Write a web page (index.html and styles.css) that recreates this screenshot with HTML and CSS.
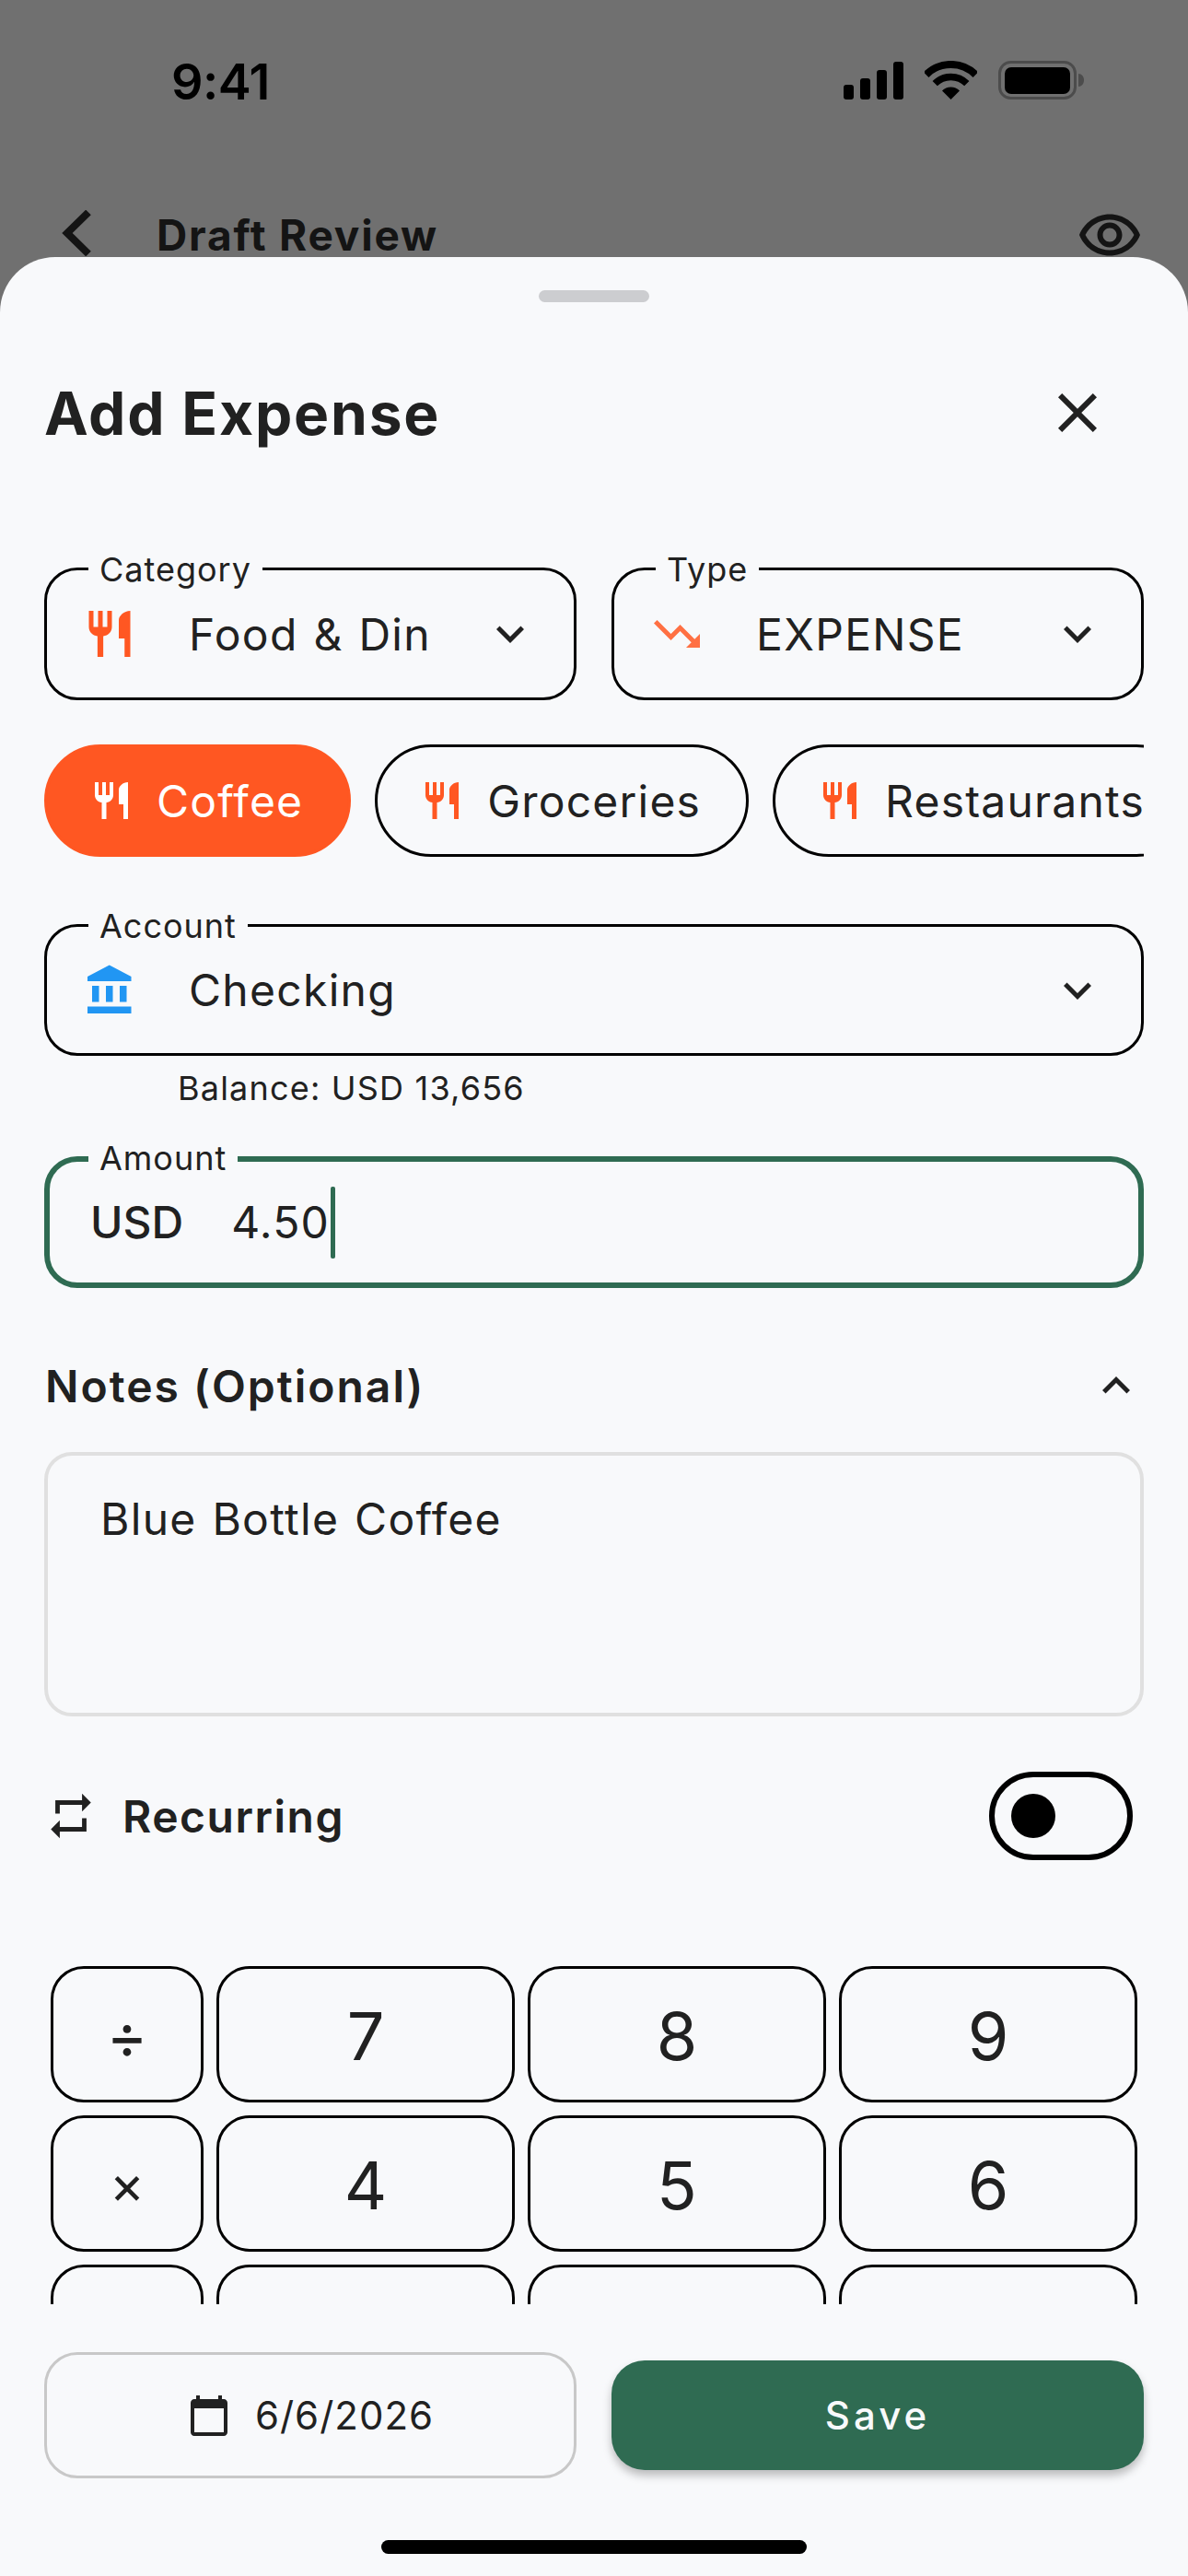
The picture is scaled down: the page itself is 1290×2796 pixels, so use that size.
FILE: index.html
```html
<!DOCTYPE html>
<html lang="en">
<head>
    <meta charset="UTF-8">
    <meta name="viewport" content="width=device-width, initial-scale=1.0">
    <title>Add Expense</title>
    <link rel="stylesheet" href="styles.css">
</head>
<body>
    <div class="screen">
        <!-- page behind the sheet, dimmed -->
        <div class="backdrop">
            <div class="statusbar">
                <span class="time">9:41</span>
                <div class="status-icons">
                    <svg width="65" height="41" viewBox="0 0 65 41">
                        <rect x="0" y="25" width="11" height="16" rx="3"/>
                        <rect x="18" y="18" width="11" height="23" rx="3"/>
                        <rect x="36" y="9" width="11" height="32" rx="3"/>
                        <rect x="54" y="0" width="11" height="41" rx="3"/>
                    </svg>
                    <svg class="wifi" width="57" height="42" viewBox="0 0 57 42">
                        <path d="M1.6 15.1A38 38 0 0 1 55.4 15.1" fill="none" stroke="#000" stroke-width="8"/>
                        <path d="M11.2 24.7A24.5 24.5 0 0 1 45.8 24.7" fill="none" stroke="#000" stroke-width="7.5"/>
                        <path d="M28.5 42L19 32.5A13.5 13.5 0 0 1 38 32.5Z"/>
                    </svg>
                    <svg class="battery" width="93" height="42" viewBox="0 0 93 42">
                        <rect x="1.5" y="1.5" width="82" height="39" rx="12" fill="none" stroke="#4c4c4c" stroke-width="3"/>
                        <rect x="7" y="7" width="71" height="29" rx="7"/>
                        <path d="M87 14c3.500 0 6 3 6 7s-2.500 7-6 7z" fill="#4c4c4c"/>
                    </svg>
                </div>
            </div>
            <div class="appbar">
                <svg class="back-icon" width="32" height="50" viewBox="0 0 32 50"><path d="M29 2.500L6 25l23 22.500"/></svg>
                <span class="appbar-title">Draft Review</span>
                <svg class="eye-icon" width="72" height="72" viewBox="0 0 24 24"><path d="M12 6.500c3.790 0 7.170 2.130 8.820 5.500-1.650 3.370-5.020 5.500-8.820 5.500S4.830 15.370 3.180 12C4.830 8.630 8.210 6.500 12 6.500m0-2C7 4.500 2.730 7.610 1 12c1.730 4.390 6 7.500 11 7.500s9.270-3.110 11-7.500c-1.730-4.390-6-7.500-11-7.500zm0 5c1.380 0 2.500 1.120 2.500 2.500s-1.120 2.500-2.500 2.500-2.500-1.120-2.500-2.500 1.120-2.500 2.500-2.500m0-2c-2.480 0-4.500 2.020-4.500 4.500s2.020 4.500 4.500 4.500 4.500-2.020 4.500-4.500-2.020-4.500-4.500-4.500z"/></svg>
            </div>
        </div>

        <div class="sheet">
            <div class="handle"></div>

            <div class="sheet-header">
                <h1>Add Expense</h1>
                <svg class="close-icon" width="72" height="72" viewBox="0 0 24 24"><path d="M19 6.410L17.590 5 12 10.590 6.410 5 5 6.410 10.590 12 5 17.590 6.410 19 12 13.410 17.590 19 19 17.590 13.410 12z"/></svg>
            </div>

            <div class="field-row">
                <div class="field">
                    <span class="field-label">Category</span>
                    <span class="field-icon food"><svg width="60" height="60" viewBox="0 0 24 24"><path d="M11 9H9V2H7v7H5V2H3v7c0 2.120 1.660 3.840 3.750 3.970V22h2.500v-9.030C11.340 12.840 13 11.120 13 9V2h-2v7zm5-3v8h2.500v8H21V2c-2.760 0-5 2.240-5 4z"/></svg></span>
                    <span class="field-value">Food &amp; Din</span>
                    <svg class="chevron" width="60" height="60" viewBox="0 0 24 24"><path d="M7.410 8.590L12 13.170l4.590-4.580L18 10l-6 6-6-6 1.410-1.410z"/></svg>
                </div>
                <div class="field">
                    <span class="field-label">Type</span>
                    <span class="field-icon expense"><svg width="60" height="60" viewBox="0 0 24 24"><path d="M16 18l2.290-2.290-4.880-4.880-4 4L2 7.410 3.410 6l6 6 4-4 6.300 6.290L22 12v6z"/></svg></span>
                    <span class="field-value">EXPENSE</span>
                    <svg class="chevron" width="60" height="60" viewBox="0 0 24 24"><path d="M7.410 8.590L12 13.170l4.590-4.580L18 10l-6 6-6-6 1.410-1.410z"/></svg>
                </div>
            </div>

            <div class="chips">
                <div class="chip selected">
                    <svg width="48" height="48" viewBox="0 0 24 24"><path d="M11 9H9V2H7v7H5V2H3v7c0 2.120 1.660 3.840 3.750 3.970V22h2.500v-9.030C11.340 12.840 13 11.120 13 9V2h-2v7zm5-3v8h2.500v8H21V2c-2.760 0-5 2.240-5 4z"/></svg>
                    <span>Coffee</span>
                </div>
                <div class="chip">
                    <svg width="48" height="48" viewBox="0 0 24 24"><path d="M11 9H9V2H7v7H5V2H3v7c0 2.120 1.660 3.840 3.750 3.970V22h2.500v-9.030C11.340 12.840 13 11.120 13 9V2h-2v7zm5-3v8h2.500v8H21V2c-2.760 0-5 2.240-5 4z"/></svg>
                    <span>Groceries</span>
                </div>
                <div class="chip">
                    <svg width="48" height="48" viewBox="0 0 24 24"><path d="M11 9H9V2H7v7H5V2H3v7c0 2.120 1.660 3.840 3.750 3.970V22h2.500v-9.030C11.340 12.840 13 11.120 13 9V2h-2v7zm5-3v8h2.500v8H21V2c-2.760 0-5 2.240-5 4z"/></svg>
                    <span>Restaurants</span>
                </div>
            </div>

            <div class="field account-field">
                <span class="field-label">Account</span>
                <span class="field-icon bank"><svg width="60" height="60" viewBox="0 0 24 24"><path d="M4 10v7h3v-7H4zm6 0v7h3v-7h-3zM2 22h19v-3H2v3zm14-12v7h3v-7h-3zm-4.500-9L2 6v2h19V6l-9.500-5z"/></svg></span>
                <span class="field-value">Checking</span>
                <svg class="chevron" width="60" height="60" viewBox="0 0 24 24"><path d="M7.410 8.590L12 13.170l4.590-4.580L18 10l-6 6-6-6 1.410-1.410z"/></svg>
            </div>
            <div class="balance">Balance: USD 13,656</div>

            <div class="field amount-field">
                <span class="field-label">Amount</span>
                <span class="currency">USD</span>
                <span class="amount">4.50</span>
                <span class="caret"></span>
            </div>

            <div class="notes-header">
                <h2>Notes (Optional)</h2>
                <svg class="chevron" width="60" height="60" viewBox="0 0 24 24"><path d="M7.410 15.410L12 10.830l4.590 4.580L18 14l-6-6-6 6z"/></svg>
            </div>
            <div class="notes-box">Blue Bottle Coffee</div>

            <div class="recurring">
                <svg class="repeat-icon" width="58" height="58" viewBox="0 0 24 24"><path d="M7 7h10v3l4-4-4-4v3H5v6h2V7zm10 10H7v-3l-4 4 4 4v-3h12v-6h-2v4z"/></svg>
                <span class="recurring-label">Recurring</span>
                <div class="toggle"><div class="thumb"></div></div>
            </div>

            <div class="keypad">
                <div class="key op">÷</div>
                <div class="key">7</div>
                <div class="key">8</div>
                <div class="key">9</div>
                <div class="key op times">×</div>
                <div class="key">4</div>
                <div class="key">5</div>
                <div class="key">6</div>
                <div class="key op"></div>
                <div class="key"></div>
                <div class="key"></div>
                <div class="key"></div>
            </div>

            <div class="actions">
                <div class="date-btn">
                    <svg width="48" height="48" viewBox="0 0 24 24"><path d="M20 3h-1V1h-2v2H7V1H5v2H4c-1.100 0-2 .9-2 2v16c0 1.100.9 2 2 2h16c1.100 0 2-.9 2-2V5c0-1.100-.9-2-2-2zm0 18H4V8h16v13z"/></svg>
                    <span>6/6/2026</span>
                </div>
                <div class="save-btn">Save</div>
            </div>

            <div class="home-bar"></div>
        </div>
    </div>
</body>
</html>
```

FILE: styles.css
```css
* {
    box-sizing: border-box;
}

body {
    margin: 0;
    font-family: Inter, "Noto Sans", sans-serif;
    color: #212121;
}

svg {
    display: block;
    flex: none;
}

.screen {
    width: 1290px;
    height: 2796px;
    background-color: #707070;
    display: flex;
    flex-direction: column;
    overflow: hidden;
}

/* behind the sheet */
.backdrop {
    height: 279px;
    flex: none;
    overflow: hidden;
}

.statusbar {
    height: 174px;
    display: flex;
    align-items: center;
    justify-content: space-between;
    padding: 2px 113px 0 186px;
}

.time {
    font-size: 54px;
    font-weight: 600;
    letter-spacing: -0.5px;
    color: #000;
}

.status-icons {
    display: flex;
    align-items: flex-end;
    gap: 23px;
    margin-bottom: 2px;
}

.appbar {
    height: 162px;
    display: flex;
    align-items: center;
    padding: 0 49px 0 67px;
    color: #141414;
}

.back-icon {
    margin-bottom: 4px;
    fill: none;
    stroke: #141414;
    stroke-width: 8;
}

.appbar-title {
    margin-left: 71px;
    font-size: 46px;
    line-height: 1;
    font-weight: 700;
    letter-spacing: 1.8px;
}

.eye-icon {
    margin-left: auto;
    fill: #141414;
}

/* bottom sheet */
.sheet {
    flex: 1;
    background-color: #f8f9fb;
    border-radius: 60px 60px 0 0;
    padding: 0 48px;
    display: flex;
    flex-direction: column;
}

.handle {
    width: 120px;
    height: 13px;
    margin: 36px auto 0;
    background-color: #cccdd0;
    border-radius: 7px;
}

.sheet-header {
    height: 80px;
    margin-top: 80px;
    display: flex;
    align-items: center;
    justify-content: space-between;
}

h1 {
    margin: 0;
    font-size: 64px;
    font-weight: 700;
    letter-spacing: 1.8px;
}

.close-icon {
    margin-right: 36px;
    fill: #212121;
}

.field-row {
    display: grid;
    grid-template-columns: 1fr 1fr;
    gap: 38px;
    margin-top: 128px;
}

.field {
    position: relative;
    height: 144px;
    border: 3px solid #000;
    border-radius: 36px;
    display: flex;
    align-items: center;
    padding-left: 41px;
    padding-right: 39px;
}

.field-label {
    position: absolute;
    top: -23px;
    left: 45px;
    padding: 0 12px;
    background-color: #f8f9fb;
    font-size: 36px;
    line-height: 44px;
    letter-spacing: 1px;
}

.field-icon {
    width: 54px;
    height: 60px;
    display: flex;
    justify-content: center;
    flex: none;
}

.field-icon svg {
    margin: 0 -3px;
}

.food {
    fill: #ff5722;
}

.expense {
    fill: #ff7043;
}

.bank {
    fill: #2196f3;
    padding-left: 2px;
}

.field-value {
    margin-left: 59px;
    font-size: 48px;
    letter-spacing: 1.3px;
    word-spacing: 2px;
}

.chevron {
    margin-left: auto;
    fill: #212121;
}

.chips {
    display: flex;
    gap: 26px;
    margin-top: 48px;
    overflow: hidden;
}

.chip {
    height: 122px;
    flex: none;
    display: flex;
    align-items: center;
    padding: 0 49px 0 46px;
    border: 3px solid #000;
    border-radius: 61px;
    fill: #ff5722;
    font-size: 48px;
    letter-spacing: 1.2px;
}

.chip span {
    margin-left: 25px;
}

.chip.selected {
    background-color: #ff5722;
    border-color: #ff5722;
    fill: #fff;
    color: #fff;
}

.account-field {
    height: 143px;
    margin-top: 73px;
}

.balance {
    margin-top: 15px;
    padding-left: 145px;
    font-size: 36px;
    line-height: 41px;
    letter-spacing: 1.2px;
}

.amount-field {
    height: 143px;
    margin-top: 53px;
    border: 6px solid #2f6b52;
    padding-left: 44px;
}

.amount-field .field-label {
    top: -26px;
    left: 42px;
}

.currency {
    font-size: 48px;
    font-weight: 500;
}

.amount {
    margin-left: 52px;
    font-size: 48px;
    letter-spacing: 1.2px;
}

.caret {
    width: 5px;
    height: 78px;
    margin-left: 1px;
    background-color: #2f6b52;
    border-radius: 2px;
}

.notes-header {
    height: 80px;
    margin-top: 66px;
    display: flex;
    align-items: center;
}

h2 {
    margin: 0 0 0 1px;
    font-size: 48px;
    font-weight: 600;
    letter-spacing: 2px;
}

.notes-box {
    height: 287px;
    margin-top: 32px;
    padding: 41px 57px;
    border: 4px solid #e0e0e0;
    border-radius: 30px;
    font-size: 48px;
    line-height: 56px;
    letter-spacing: 1.3px;
    word-spacing: 2px;
}

.recurring {
    height: 96px;
    margin-top: 60px;
    display: flex;
    align-items: center;
    padding: 0 12px 0 0;
}

.repeat-icon {
    fill: #212121;
    margin-right: 27px;
}

.recurring-label {
    font-size: 48px;
    font-weight: 600;
    letter-spacing: 1.5px;
}

.toggle {
    width: 156px;
    height: 96px;
    margin-left: auto;
    padding-left: 18px;
    border: 6px solid #000;
    border-radius: 48px;
    display: flex;
    align-items: center;
}

.thumb {
    width: 48px;
    height: 48px;
    background-color: #000;
    border-radius: 50%;
}

.keypad {
    height: 367px;
    margin-top: 115px;
    padding: 0 7px;
    display: grid;
    grid-template-columns: 166px repeat(3, 1fr);
    grid-auto-rows: 148px;
    gap: 14px;
    overflow: hidden;
}

.key {
    border: 3px solid #000;
    border-radius: 36px;
    display: flex;
    align-items: center;
    justify-content: center;
    padding-top: 2px;
    font-size: 72px;
}

.key.op {
    font-size: 68px;
}

.key.times {
    font-size: 58px;
}

.actions {
    display: grid;
    grid-template-columns: 1fr 1fr;
    gap: 38px;
    align-items: center;
    margin-top: 52px;
}

.date-btn {
    height: 137px;
    border: 3px solid #c8c8c8;
    border-radius: 36px;
    display: flex;
    align-items: center;
    justify-content: center;
    gap: 26px;
    fill: #212121;
    font-size: 42px;
    letter-spacing: 1px;
}

.save-btn {
    height: 119px;
    background-color: #2f6b52;
    border-radius: 36px;
    box-shadow: 0 6px 10px rgba(0, 0, 0, 0.25);
    color: #f8f9fb;
    display: flex;
    align-items: center;
    justify-content: center;
    font-size: 42px;
    font-weight: 500;
    letter-spacing: 4px;
}

.home-bar {
    width: 462px;
    height: 15px;
    margin: 67px auto 0;
    background-color: #000;
    border-radius: 8px;
}
```
